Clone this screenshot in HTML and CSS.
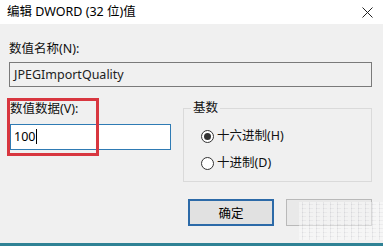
FILE: index.html
```html
<!DOCTYPE html>
<html lang="zh-CN">
<head>
    <meta charset="UTF-8">
    <title>编辑 DWORD (32 位)值</title>
    <link rel="stylesheet" href="styles.css">
</head>
<body>
    <div class="dialog">
        <div class="titlebar">
            <span class="title">编辑 DWORD (32 位)值</span>
            <svg class="close" width="11" height="11" viewBox="0 0 11 11">
                <path d="M0.5 0.5 L10.5 10.5 M10.5 0.5 L0.5 10.5" stroke="#222" stroke-width="1" fill="none"/>
            </svg>
        </div>
        <div class="content">
            <div class="label">数值名称(N):</div>
            <div class="name-input">JPEGImportQuality</div>

            <div class="lower">
                <div class="data-col">
                    <div class="label">数值数据(V):</div>
                    <div class="data-input">100<span class="caret"></span></div>
                    <div class="highlight"></div>
                </div>
                <fieldset class="base">
                    <legend>基数</legend>
                    <div class="radio-row first">
                        <span class="radio checked"></span>十六进制(H)
                    </div>
                    <div class="radio-row">
                        <span class="radio"></span>十进制(D)
                    </div>
                </fieldset>
            </div>

            <div class="buttons">
                <div class="btn default">确定</div>
                <div class="btn cancel"></div>
            </div>
        </div>
        <div class="watermark"></div>
    </div>
</body>
</html>
```

FILE: styles.css
```css
body {
    margin: 0;
    font-family: "Noto Sans", "Noto Sans CJK SC", sans-serif;
    font-size: 12.5px;
    color: #111;
}
.dialog {
    position: relative;
    width: 383px;
    height: 246px;
    box-sizing: border-box;
    background: #f0f0f0;
    border-bottom: 3px solid #2f8295;
    display: flex;
    flex-direction: column;
    overflow: hidden;
}
.titlebar {
    height: 24px;
    background: #fff;
    display: flex;
    align-items: center;
    justify-content: space-between;
    padding: 0 10px 0 7px;
}
.title {
    line-height: 16px;
    color: #000;
}
.close {
    display: block;
    margin-top: 1px;
}
.content {
    padding: 17px 11px 0 9px;
}
.label {
    line-height: 16px;
}
.name-input {
    margin-top: 5px;
    height: 25px;
    box-sizing: border-box;
    border: 1px solid #7a7a7a;
    background: #f0f0f0;
    padding-left: 4px;
    line-height: 23px;
    color: #222;
}
.lower {
    display: flex;
    align-items: flex-start;
    justify-content: space-between;
}
.data-col {
    position: relative;
    margin-top: 14px;
    margin-left: 1px;
}
.data-input {
    margin-top: 7px;
    width: 161px;
    height: 26px;
    box-sizing: border-box;
    border: 1px solid #2f7bb4;
    background: #fff;
    padding-left: 3px;
    line-height: 24px;
    color: #000;
}
.caret {
    display: inline-block;
    width: 1px;
    height: 15px;
    background: #000;
    vertical-align: -3px;
    margin-left: 1px;
}
.highlight {
    position: absolute;
    left: -3px;
    top: -3px;
    width: 92px;
    height: 58px;
    box-sizing: border-box;
    border: 3px solid #d8363f;
}
.base {
    margin: 13px 0 0 0;
    width: 189px;
    height: 82px;
    box-sizing: border-box;
    border: 1px solid #dadada;
    padding: 0 0 0 7px;
}
.base legend {
    padding: 0 2px;
    line-height: 16px;
}
.radio-row {
    display: flex;
    align-items: center;
    line-height: 16px;
    margin-left: 10px;
    margin-top: 11px;
}
.radio-row.first {
    margin-top: 12px;
}
.radio {
    width: 13px;
    height: 13px;
    box-sizing: border-box;
    border: 1px solid #333;
    border-radius: 50%;
    background: #fff;
    margin-right: 3px;
    display: flex;
    align-items: center;
    justify-content: center;
}
.radio.checked::after {
    content: "";
    width: 7px;
    height: 7px;
    border-radius: 50%;
    background: #333;
}
.buttons {
    display: flex;
    justify-content: flex-end;
    gap: 12px;
    margin-top: 17px;
}
.btn {
    width: 86px;
    height: 27px;
    box-sizing: border-box;
    display: flex;
    align-items: center;
    justify-content: center;
    background: #e1e1e1;
    color: #000;
}
.btn.default {
    border: 2px solid #2c6aa8;
}
.btn.cancel {
    border: 1px solid #b9b9b9;
    background: #e9e9e9;
}
.watermark {
    position: absolute;
    right: 0;
    bottom: 3px;
    width: 84px;
    height: 38px;
    opacity: 0.45;
    background:
        repeating-linear-gradient(90deg, rgba(255,255,255,0.9) 0 3px, rgba(170,170,180,0.35) 3px 4px, rgba(255,255,255,0.5) 4px 7px),
        repeating-linear-gradient(0deg, rgba(255,255,255,0.9) 0 3px, rgba(150,150,160,0.3) 3px 4px);
}
```
